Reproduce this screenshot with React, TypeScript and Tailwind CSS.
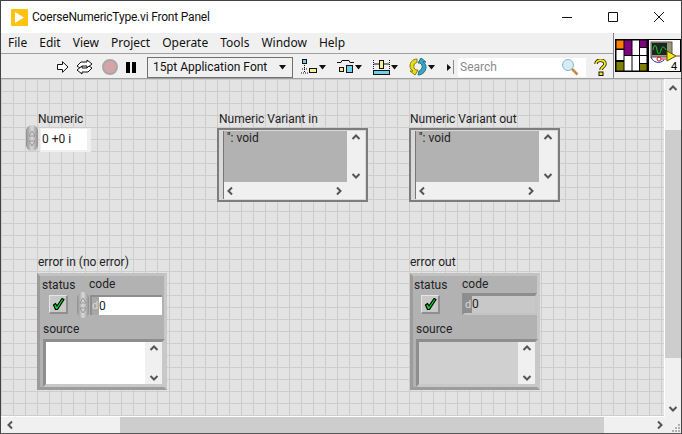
import React from 'react';

const uiFont = "font-['Roboto',sans-serif]";
const menuFont = "font-['Noto_Sans',sans-serif]";

const Chevron = ({ dir, className = '' }: { dir: 'up' | 'down' | 'left' | 'right'; className?: string }) => {
  const points = {
    up: '1.5,7 5,3.5 8.5,7',
    down: '1.5,3 5,6.5 8.5,3',
    left: '7,1.5 3.5,5 7,8.5',
    right: '3,1.5 6.5,5 3,8.5',
  }[dir];
  return (
    <svg width="10" height="10" viewBox="0 0 10 10" className={className}>
      <polyline points={points} fill="none" stroke="#555555" strokeWidth="2" />
    </svg>
  );
};

const DropArrow = () => (
  <svg width="7" height="5" viewBox="0 0 7 5" className="shrink-0">
    <path d="M0 0h7L3.500 4.500z" fill="#111111" />
  </svg>
);

const Spinner = ({ className = '' }: { className?: string }) => (
  <div className={`w-[12px] h-[26px] rounded-full bg-[linear-gradient(90deg,#8f8f8f,#dadada_50%,#8f8f8f)] flex flex-col items-center justify-center gap-[3px] ${className}`}>
    <svg width="8" height="7" viewBox="0 0 8 7">
      <path d="M4 1L7 6H1z" fill="#d4d4d4" stroke="#8a8a8a" strokeWidth="0.8" />
    </svg>
    <svg width="8" height="7" viewBox="0 0 8 7">
      <path d="M4 6L7 1H1z" fill="#d4d4d4" stroke="#8a8a8a" strokeWidth="0.8" />
    </svg>
  </div>
);

const CheckButton = () => (
  <div className="w-[19px] h-[19px] bg-[#c9c9c9] border-t border-l border-[#e6e6e6] border-r-2 border-b-2 border-r-[#8f8f8f] border-b-[#8f8f8f] flex items-center justify-center">
    <svg width="13" height="14" viewBox="0 0 13 14">
      <path d="M1.500 8L3.500 6.500L5 9L10 1.500L12 2.500L5.500 12.500H3.500z" fill="#00e020" stroke="#000000" strokeWidth="1.200" strokeLinejoin="round" />
    </svg>
  </div>
);

const VariantBox = ({ className }: { className: string }) => (
  <div className={`absolute w-[151px] h-[74px] border-2 border-[#7d7d7d] bg-[#d9d9d9] pl-[4px] pt-[1px] pr-[1px] pb-[1px] ${className}`}>
    <div className="w-full h-full flex flex-col border-l border-[#777777]">
      <div className="flex-1 flex min-h-0">
        <div className={`flex-1 bg-[#b2b2b2] pl-[3px] text-[12px] leading-[14px] text-[#222222] ${uiFont}`}>&apos;&apos;: void</div>
        <div className="w-[18px] bg-[#f0f0f0] flex flex-col items-center justify-between py-[1px]">
          <Chevron dir="up" />
          <Chevron dir="down" />
        </div>
      </div>
      <div className="h-[17px] bg-[#f0f0f0] flex items-center justify-between pl-[1px] pr-[21px]">
        <Chevron dir="left" />
        <Chevron dir="right" />
      </div>
    </div>
  </div>
);

const SourceBox = ({ fill, className }: { fill: string; className: string }) => (
  <div className={`absolute w-[122px] h-[48px] bg-[#c4c4c4] border-t-[3px] border-l-[3px] border-r-[3px] border-b-[3px] border-t-[#8e8e8e] border-l-[#8e8e8e] border-r-[#c8c8c8] border-b-[#c8c8c8] flex ${className}`}>
    <div className={`flex-1 ${fill}`} />
    <div className="w-[17px] bg-[#f0f0f0] flex flex-col items-center justify-between py-[1px]">
      <Chevron dir="up" />
      <Chevron dir="down" />
    </div>
  </div>
);

const Label = ({ className, children }: { className: string; children: React.ReactNode }) => (
  <span className={`absolute text-[12px] leading-[14px] whitespace-nowrap text-[#222222] ${uiFont} ${className}`}>{children}</span>
);

const TitleBar = () => (
  <div className="h-[32px] bg-white flex items-center shrink-0">
    <div className="ml-[10px] w-[17px] h-[17px] rounded-[1px] bg-[#ffc20e] flex items-center justify-center">
      <svg width="9" height="11" viewBox="0 0 9 11">
        <path d="M0 0L9 5.500L0 11z" fill="#ffffff" />
      </svg>
    </div>
    <span className={`ml-[4px] text-[12px] tracking-[-0.2px] text-[#111111] ${uiFont}`}>CoerseNumericType.vi Front Panel</span>
    <div className="ml-auto flex items-center pr-[17px] gap-[36px]">
      <svg width="10" height="10" viewBox="0 0 10 10">
        <path d="M0 5.500h10" stroke="#111111" />
      </svg>
      <svg width="10" height="10" viewBox="0 0 10 10">
        <path d="M.5.5h9v9h-9z" fill="none" stroke="#111111" />
      </svg>
      <svg width="10" height="10" viewBox="0 0 10 10">
        <path d="M0 0l10 10M10 0L0 10" stroke="#111111" />
      </svg>
    </div>
  </div>
);

const MenuBar = () => (
  <div className={`h-[21px] bg-[#f0f0f0] flex items-center pl-[7px] gap-[12px] text-[12px] text-[#111111] border-b border-[#a0a0a0] ${menuFont}`}>
    {['File', 'Edit', 'View', 'Project', 'Operate', 'Tools', 'Window', 'Help'].map((item) => (
      <span key={item}>{item}</span>
    ))}
  </div>
);

const ToolIcons = () => (
  <>
    <svg width="12" height="12" viewBox="0 0 12 12" className="ml-[56px] shrink-0">
      <path d="M.5 3.500h5V.7L11 6l-5.500 5.300V8.500h-5z" fill="#ffffff" stroke="#111111" />
    </svg>
    <svg width="17" height="16" viewBox="0 0 17 16" className="ml-[7px] shrink-0">
      <path d="M1 7L5 3h6V1l5 4-5 4V7H6L4 9z" fill="#ffffff" stroke="#111111" />
      <path d="M16 9l-4 4H6v2L1 11l5-4v2h5l2-2z" fill="#ffffff" stroke="#111111" />
    </svg>
    <div className="ml-[9px] w-[16px] h-[16px] rounded-full bg-[#d6a3a6] border-2 border-[#a8a8a8] shrink-0" />
    <div className="ml-[8px] w-[10px] h-[11px] flex justify-between shrink-0">
      <div className="w-[4px] bg-black" />
      <div className="w-[4px] bg-black" />
    </div>
    <div className={`ml-[11px] w-[146px] h-[21px] border border-[#707070] flex items-center justify-between pl-[5px] pr-[6px] text-[12px] text-[#111111] shrink-0 ${uiFont}`}>
      <span>15pt Application Font</span>
      <DropArrow />
    </div>
    <svg width="17" height="16" viewBox="0 0 17 16" className="ml-[8px] shrink-0">
      <rect x="1.500" y="0.500" width="4" height="4" fill="#6fd0e8" stroke="#111111" />
      <path d="M3.500 6v8M1 10h5M0 14h8" stroke="#111111" strokeDasharray="1 1" />
      <rect x="8.500" y="9.500" width="7" height="4" fill="#f5f08a" stroke="#111111" />
    </svg>
    <div className="ml-[1px] shrink-0"><DropArrow /></div>
    <svg width="17" height="16" viewBox="0 0 17 16" className="ml-[11px] shrink-0">
      <path d="M0 3.500h4l1-2h7l1 2h4" fill="none" stroke="#111111" />
      <rect x="2.500" y="8.500" width="4" height="4" fill="#f5f08a" stroke="#111111" />
      <rect x="9.500" y="6.500" width="6" height="7" fill="#6fd0e8" stroke="#111111" />
    </svg>
    <div className="ml-[1px] shrink-0"><DropArrow /></div>
    <svg width="18" height="17" viewBox="0 0 18 17" className="ml-[11px] shrink-0">
      <path d="M.5 1v9M16.500 1v9" stroke="#111111" strokeDasharray="1 1" />
      <rect x="6.500" y="1.500" width="4" height="8" fill="#f5f08a" stroke="#111111" />
      <path d="M1 5h5M11 5h5" stroke="#111111" />
      <rect x="0.500" y="11.500" width="16" height="4" fill="#6fd0e8" stroke="#111111" />
    </svg>
    <div className="shrink-0"><DropArrow /></div>
    <svg width="18" height="18" viewBox="0 0 18 18" className="ml-[11px] shrink-0">
      <path d="M8 1C3 1 1 5 1 8c0 2 1 4 3 5H1l5 4 3-5H7C5 11 4.500 9 5 7c.5-1.500 2-2.500 3-2.500z" fill="#e8dc20" stroke="#8a8000" />
      <path d="M9 17c5 0 8-4 8-8 0-2-1-4-3-5h3l-5-4-3 5h2c2 1 2.500 3 2 5-.5 1.500-2 2.500-3 3z" fill="#36a6c4" stroke="#1d6f85" />
    </svg>
    <div className="ml-[1px] shrink-0"><DropArrow /></div>
    <svg width="4" height="7" viewBox="0 0 4 7" className="ml-[12px] shrink-0">
      <path d="M0 0l4 3.500L0 7z" fill="#111111" />
    </svg>
    <div className="ml-[2px] w-px h-[14px] bg-[#8a8a8a] shrink-0" />
    <div className={`ml-[4px] w-[128px] h-[19px] bg-white flex items-center justify-between pl-[2px] pr-[7px] text-[12px] text-[#8a8a8a] shrink-0 ${uiFont}`}>
      <span>Search</span>
      <svg width="18" height="18" viewBox="0 0 18 18">
        <path d="M10.500 10.500L16.500 16.500" stroke="#c98a3e" strokeWidth="2.500" />
        <circle cx="7" cy="7" r="5.500" fill="#d5ecf9" stroke="#8eb4cc" />
      </svg>
    </div>
    <svg width="13" height="17" viewBox="0 0 13 17" className="ml-[8px] shrink-0">
      <path d="M2 5c0-5 9-5 9 0 0 3-4 3-4 6" fill="none" stroke="#111111" strokeWidth="3.400" />
      <path d="M2 5c0-5 9-5 9 0 0 3-4 3-4 6" fill="none" stroke="#ffe81a" strokeWidth="1.800" />
      <rect x="5" y="13" width="4" height="3.500" fill="#ffe81a" stroke="#111111" />
    </svg>
  </>
);

const ConnectorPane = () => (
  <svg width="33" height="33" viewBox="0 0 33 33" className="shrink-0">
    <rect x="0" y="0" width="33" height="33" fill="#000000" />
    <rect x="1.500" y="1.500" width="7" height="8" fill="#ff8000" />
    <rect x="1.500" y="11" width="7" height="10" fill="#ffffff" />
    <rect x="1.500" y="23" width="7" height="8.500" fill="#808000" />
    <rect x="9.500" y="1.500" width="7" height="14.500" fill="#800080" />
    <rect x="9.500" y="17" width="7" height="14.500" fill="#ffffff" />
    <rect x="17.500" y="1.500" width="6.500" height="14.500" fill="#ffffff" />
    <rect x="17.500" y="17" width="6.500" height="14.500" fill="#ffffff" />
    <rect x="25" y="1.500" width="6.500" height="6.500" fill="#800080" />
    <rect x="25" y="9" width="6.500" height="7" fill="#ffffff" />
    <rect x="25" y="17" width="6.500" height="7" fill="#ffffff" />
    <rect x="25" y="25" width="6.500" height="6.500" fill="#808000" />
  </svg>
);

const ViIcon = () => (
  <svg width="33" height="33" viewBox="0 0 33 33" className="shrink-0">
    <rect x="0.500" y="0.500" width="32" height="32" fill="#ffffff" stroke="#000000" />
    <rect x="3" y="3" width="21" height="15" fill="#9a9a7a" stroke="#555555" />
    <rect x="4" y="4" width="15" height="12" fill="#222222" />
    <path d="M5 11c1-6 3-6 4 0s3 4 4 0 3-4 5 0" fill="none" stroke="#00e020" />
    <path d="M3 18c2 6 9 7 13 3" fill="none" stroke="#1030d0" />
    <circle cx="11" cy="20" r="2" fill="none" stroke="#d01010" />
    <path d="M13 20h8M28 17h4" stroke="#e01010" />
    <path d="M19 12l9 5-9 5z" fill="#f2e81a" stroke="#555500" />
    <text x="26" y="31" fontSize="11" fill="#000000" textAnchor="middle" fontFamily="Roboto, sans-serif">4</text>
  </svg>
);

const FrontPanel = () => (
  <div className="relative flex-1 bg-[#e3e3e3] bg-[linear-gradient(#cdcdcd_1px,transparent_1px),linear-gradient(90deg,#cdcdcd_1px,transparent_1px)] bg-[size:12px_12px]">
    <Label className="left-[37px] top-[33px]">Numeric</Label>
    <Spinner className="absolute left-[25px] top-[46px]" />
    <div className="absolute left-[39px] top-[49px] w-[51px] h-[24px] bg-[#efefef] pl-[1px] pt-[1px] pb-[2px] pr-[4px]">
      <div className={`w-full h-full bg-white pl-[1px] text-[12px] leading-[21px] text-[#222222] ${uiFont}`}>0 +0 i</div>
    </div>

    <Label className="left-[218px] top-[33px]">Numeric Variant in</Label>
    <VariantBox className="left-[216px] top-[49px]" />
    <Label className="left-[409px] top-[33px]">Numeric Variant out</Label>
    <VariantBox className="left-[408px] top-[49px]" />

    <Label className="left-[37px] top-[176px]">error in (no error)</Label>
    <div className="absolute left-[36px] top-[194px] w-[130px] h-[117px] bg-[#b2b2b2] border-l-[3px] border-t-[3px] border-r-[3px] border-b-[3px] border-l-[#9c9c9c] border-t-[#c2c2c2] border-r-[#c8c8c8] border-b-[#9c9c9c]" />
    <Label className="left-[41px] top-[199px]">status</Label>
    <div className="absolute left-[48px] top-[216px]"><CheckButton /></div>
    <Label className="left-[88px] top-[198px]">code</Label>
    <Spinner className="absolute left-[76px] top-[213px]" />
    <div className="absolute left-[89px] top-[216px] w-[72px] h-[20px] border-t-2 border-l-2 border-[#8e8e8e] bg-[#a8a8a8] flex">
      <span className={`w-[7px] text-[11px] leading-[18px] text-[#d8d8d8] ${uiFont}`}>d</span>
      <div className={`flex-1 bg-white text-[12px] leading-[18px] text-[#222222] ${uiFont}`}>0</div>
    </div>
    <Label className="left-[42px] top-[243px]">source</Label>
    <SourceBox fill="bg-white" className="left-[42px] top-[260px]" />

    <Label className="left-[409px] top-[176px]">error out</Label>
    <div className="absolute left-[409px] top-[194px] w-[130px] h-[117px] bg-[#b2b2b2] border-l-[3px] border-t-[3px] border-r-[3px] border-b-[3px] border-l-[#9c9c9c] border-t-[#c2c2c2] border-r-[#c8c8c8] border-b-[#9c9c9c]" />
    <Label className="left-[413px] top-[199px]">status</Label>
    <div className="absolute left-[420px] top-[216px]"><CheckButton /></div>
    <Label className="left-[461px] top-[198px]">code</Label>
    <div className="absolute left-[461px] top-[214px] w-[75px] h-[22px] border-t-[3px] border-l-[3px] border-r-[2px] border-b-[2px] border-t-[#8e8e8e] border-l-[#8e8e8e] border-r-[#c4c4c4] border-b-[#c4c4c4] bg-[#8e8e8e] flex">
      <span className={`w-[7px] text-[11px] leading-[17px] text-[#d8d8d8] ${uiFont}`}>d</span>
      <div className={`flex-1 bg-[#c8c8c8] text-[12px] leading-[17px] text-[#222222] ${uiFont}`}>0</div>
    </div>
    <Label className="left-[415px] top-[243px]">source</Label>
    <SourceBox fill="bg-[#d0d0d0]" className="left-[415px] top-[260px]" />
  </div>
);

export default function App() {
  return (
    <div className="w-[682px] h-[434px] bg-white flex flex-col border-t border-l border-r border-b border-t-[#444444] border-l-[#444444] border-r-[#444444] border-b-[#555555] overflow-hidden">
      <TitleBar />
      <div className="flex h-[46px] shrink-0 border-b border-[#a0a0a0] bg-[#f0f0f0]">
        <div className="flex-1 flex flex-col min-w-0">
          <MenuBar />
          <div className="flex-1 flex items-center bg-[#f0f0f0] pt-[2px]">
            <ToolIcons />
          </div>
        </div>
        <div className="w-[68px] flex items-center pl-[1px] border-l border-[#808080] shrink-0">
          <ConnectorPane />
          <ViIcon />
        </div>
      </div>
      <div className="flex-1 flex min-h-0">
        <div className="flex-1 flex flex-col min-w-0">
          <div className="flex-1 flex border-r border-b border-white min-h-0">
            <FrontPanel />
          </div>
          <div className="h-[16px] bg-[#f0f0f0] flex items-center shrink-0">
            <Chevron dir="left" className="ml-[4px]" />
            <div className="ml-[105px] w-[484px] h-full bg-[#cdcdcd]" />
            <Chevron dir="right" className="ml-[51px]" />
          </div>
        </div>
        <div className="w-[16px] bg-[#f0f0f0] flex flex-col shrink-0">
          <div className="h-[17px] flex items-center justify-center"><Chevron dir="up" /></div>
          <div className="h-[34px]" />
          <div className="h-[228px] bg-[#cdcdcd]" />
          <div className="flex-1" />
          <div className="h-[17px] flex items-center justify-center"><Chevron dir="down" /></div>
          <div className="h-[16px] flex flex-wrap content-end justify-end">
            <svg width="10" height="10" viewBox="0 0 10 10">
              <path d="M7 1h2v2H7zM4 4h2v2H4zM7 4h2v2H7zM1 7h2v2H1zM4 7h2v2H4zM7 7h2v2H7z" fill="#b0b0b0" />
            </svg>
          </div>
        </div>
      </div>
    </div>
  );
}
